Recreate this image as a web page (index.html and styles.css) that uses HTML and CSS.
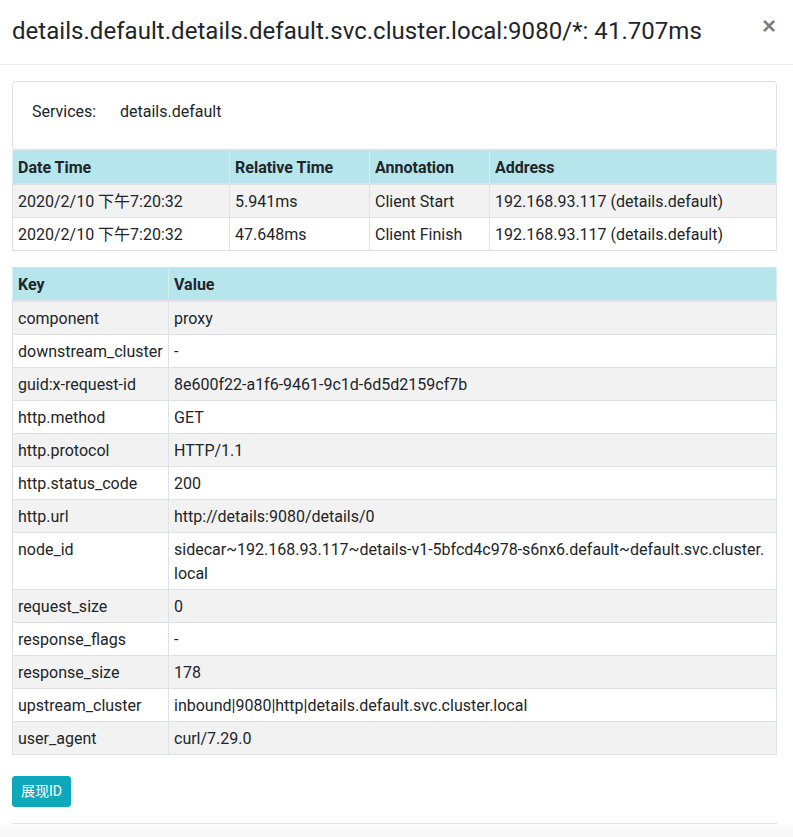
FILE: index.html
```html
<!DOCTYPE html>
<html lang="zh">
<head>
<meta charset="utf-8">
<title>Span details</title>
<link rel="stylesheet" href="styles.css">
</head>
<body>
<div class="modal">
  <div class="modal-header">
    <h4 class="modal-title">details.default.details.default.svc.cluster.local:9080/*: 41.707ms</h4>
    <button class="close" type="button">×</button>
  </div>
  <div class="modal-body">
    <div class="card">
      <div class="services"><span class="label">Services:</span><span>details.default</span></div>
    </div>
    <table class="tbl">
      <colgroup><col style="width:217px"><col style="width:140px"><col style="width:120px"><col></colgroup>
      <thead>
        <tr><th>Date Time</th><th>Relative Time</th><th>Annotation</th><th>Address</th></tr>
      </thead>
      <tbody>
        <tr><td>2020/2/10 下午7:20:32</td><td>5.941ms</td><td>Client Start</td><td>192.168.93.117 (details.default)</td></tr>
        <tr><td>2020/2/10 下午7:20:32</td><td>47.648ms</td><td>Client Finish</td><td>192.168.93.117 (details.default)</td></tr>
      </tbody>
    </table>
    <table class="tbl">
      <colgroup><col style="width:156px"><col></colgroup>
      <thead>
        <tr><th>Key</th><th>Value</th></tr>
      </thead>
      <tbody>
        <tr><td>component</td><td>proxy</td></tr>
        <tr><td>downstream_cluster</td><td>-</td></tr>
        <tr><td>guid:x-request-id</td><td>8e600f22-a1f6-9461-9c1d-6d5d2159cf7b</td></tr>
        <tr><td>http.method</td><td>GET</td></tr>
        <tr><td>http.protocol</td><td>HTTP/1.1</td></tr>
        <tr><td>http.status_code</td><td>200</td></tr>
        <tr><td>http.url</td><td>http://details:9080/details/0</td></tr>
        <tr><td>node_id</td><td class="nowrap">sidecar~192.168.93.117~details-v1-5bfcd4c978-s6nx6.default~default.svc.cluster.<br>local</td></tr>
        <tr><td>request_size</td><td>0</td></tr>
        <tr><td>response_flags</td><td>-</td></tr>
        <tr><td>response_size</td><td>178</td></tr>
        <tr><td>upstream_cluster</td><td>inbound|9080|http|details.default.svc.cluster.local</td></tr>
        <tr><td>user_agent</td><td>curl/7.29.0</td></tr>
      </tbody>
    </table>
    <button class="btn-info" type="button">展现ID</button>
    <div class="divider"></div>
  </div>
  <div class="modal-bottom"></div>
</div>
</body>
</html>
```

FILE: styles.css
```css
* { box-sizing: border-box; }
html, body { margin: 0; padding: 0; background: #fff; }
body {
  font-family: Roboto, "Noto Sans CJK SC", sans-serif;
  font-size: 16px;
  line-height: 24px;
  color: #212529;
}
.modal { width: 793px; height: 837px; overflow: hidden; display: flex; flex-direction: column; }
.modal-header {
  display: flex;
  align-items: flex-start;
  justify-content: space-between;
  padding: 15px 16px 16px 12px;
  border-bottom: 1px solid #e9ecef;
  height: 65px;
}
.modal-title { margin: 0; font-size: 24px; line-height: 33px; font-weight: 400; letter-spacing: 0.04px; }
.close {
  border: 0; background: transparent; padding: 0; margin: -1px 1px 0 0;
  font-size: 24px; line-height: 24px; font-weight: 700; color: #000; opacity: .5;
  text-shadow: 0 1px 0 #fff; font-family: "Liberation Sans", Arial, sans-serif;
}
.modal-body { padding: 16px 16px 0 12px; }
.card {
  border: 1px solid #dfdfdf;
  border-radius: 4px;
  padding: 18px 19px 25px;
  height: 69px;
}
.services { display: flex; }
.label { width: 88px; }
.tbl {
  width: 765px;
  border-collapse: collapse;
  table-layout: fixed;
  margin-bottom: 16px;
}
.tbl th, .tbl td {
  border: 1px solid #dee2e6;
  padding: 5px 5px 3px;
  text-align: left;
  vertical-align: top;
  line-height: 24px;
}
.tbl td.nowrap { white-space: nowrap; }
.tbl th { background: #b6e6ec; font-weight: 700; border-bottom-width: 2px; border-color: #c6e6ec #d9eef2 #dee2e6; }
.tbl tbody tr:nth-child(odd) td { background: #f2f2f2; }
.btn-info {
  display: block;
  margin-top: 21px;
  height: 31px;
  padding: 4px 8px;
  font-family: Roboto, "Noto Sans CJK SC", sans-serif;
  font-size: 14px;
  line-height: 21px;
  color: #fff;
  background: #0ea7bb;
  border: 1px solid #0ea7bb;
  border-radius: 3px;
}
.divider { margin-top: 16px; border-top: 1px solid #e3e3e3; height: 0; }
.modal-bottom { flex: 1; background: linear-gradient(#fcfcfc, #f7f7f7); }
```
